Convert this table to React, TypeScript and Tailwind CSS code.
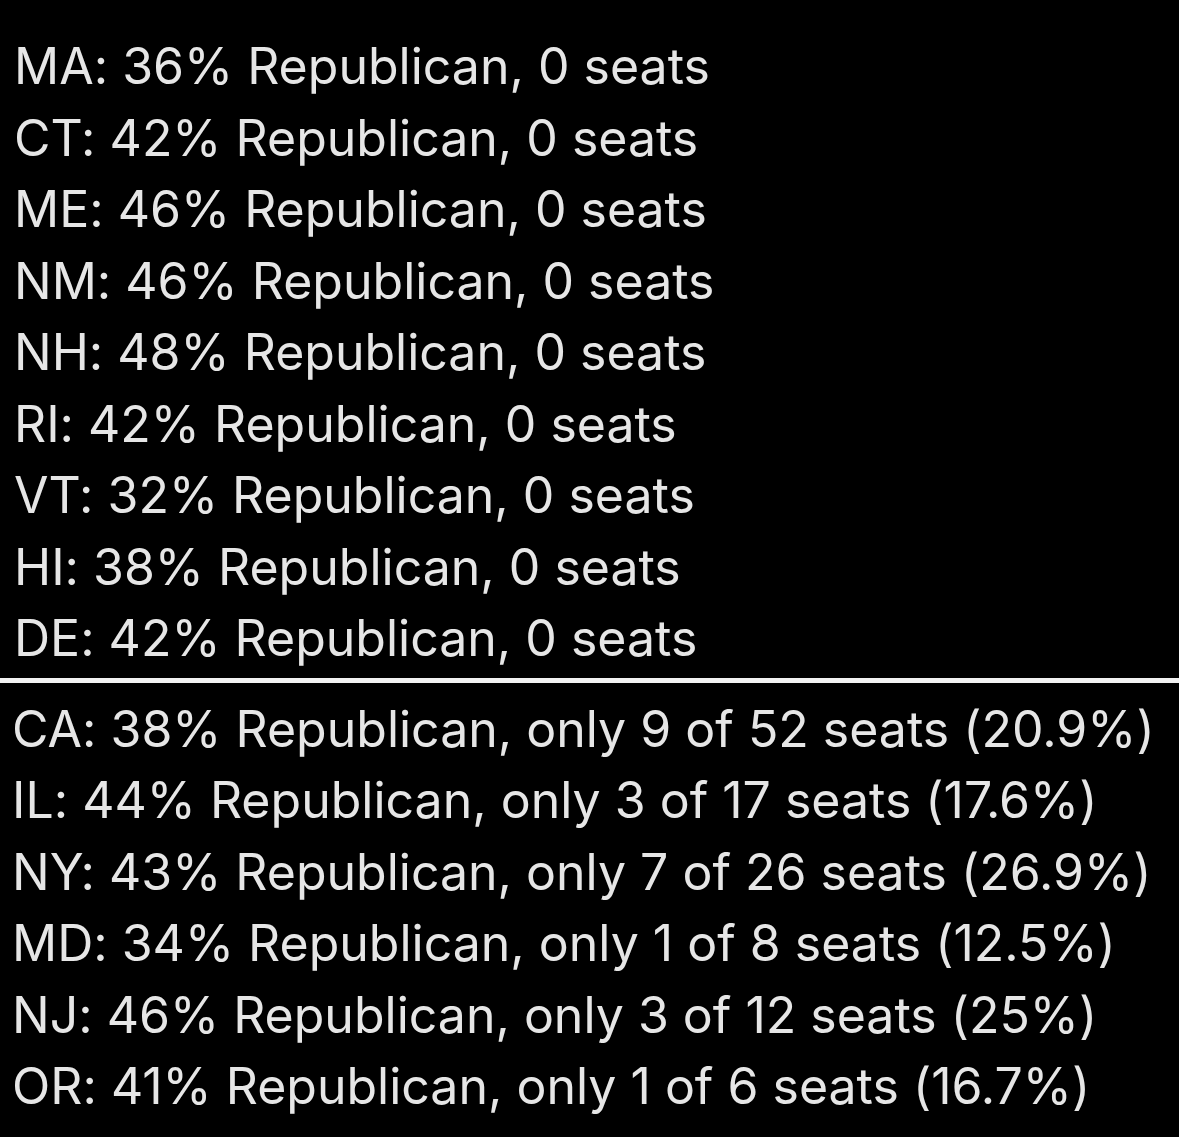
export default function App() {
  const top = [
    "MA: 36% Republican, 0 seats",
    "CT: 42% Republican, 0 seats",
    "ME: 46% Republican, 0 seats",
    "NM: 46% Republican, 0 seats",
    "NH: 48% Republican, 0 seats",
    "RI: 42% Republican, 0 seats",
    "VT: 32% Republican, 0 seats",
    "HI: 38% Republican, 0 seats",
    "DE: 42% Republican, 0 seats",
  ];
  const bottom = [
    "CA: 38% Republican, only 9 of 52 seats (20.9%)",
    "IL: 44% Republican, only 3 of 17 seats (17.6%)",
    "NY: 43% Republican, only 7 of 26 seats (26.9%)",
    "MD: 34% Republican, only 1 of 8 seats (12.5%)",
    "NJ: 46% Republican, only 3 of 12 seats (25%)",
    "OR: 41% Republican, only 1 of 6 seats (16.7%)",
  ];
  return (
    <div className="w-[1179px] h-[1137px] bg-black text-[#e6e6e6] overflow-hidden font-['Inter',sans-serif] text-[50px] leading-[71.5px] [font-feature-settings:'calt'_0]">
      <div className="pt-[31px] pl-[14px]">
        {top.map((t) => (
          <div key={t} className="whitespace-nowrap">{t}</div>
        ))}
      </div>
      <div className="mt-[3px] h-[5px] bg-[#f2f2f2]" />
      <div className="mt-[11px] pl-[12px]">
        {bottom.map((t) => (
          <div key={t} className="whitespace-nowrap">{t}</div>
        ))}
      </div>
    </div>
  );
}
